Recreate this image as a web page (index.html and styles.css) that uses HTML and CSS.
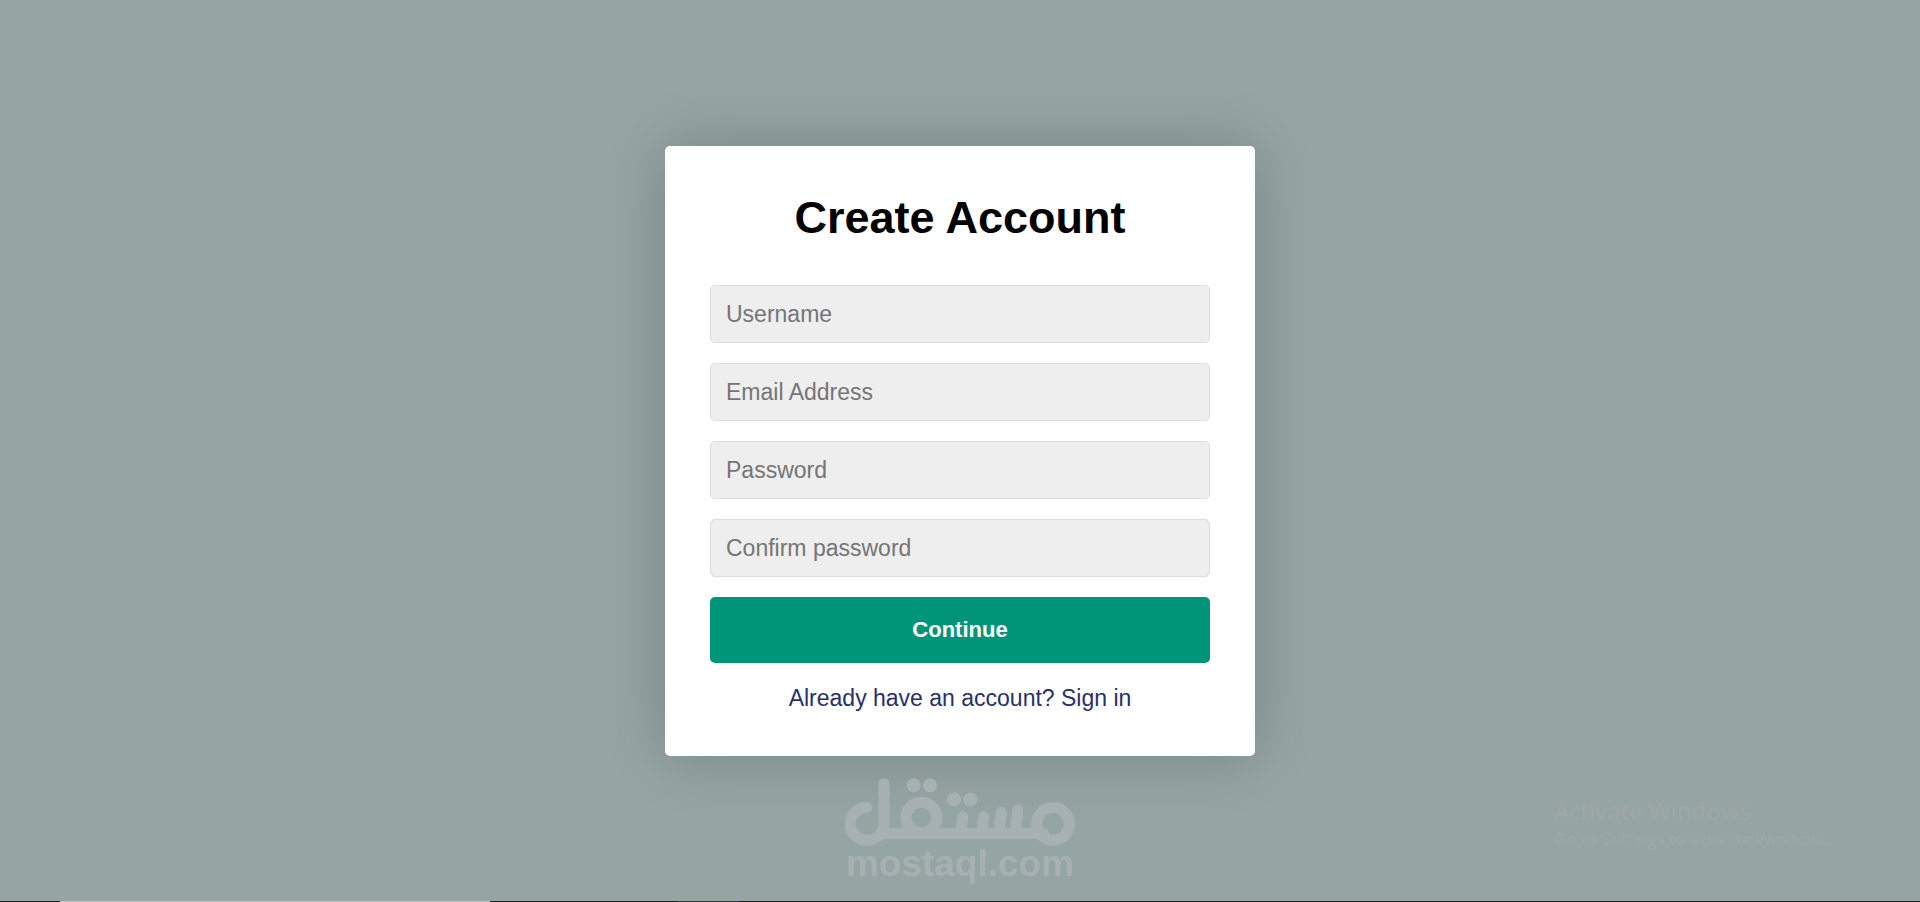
FILE: index.html
```html
<!DOCTYPE html>
<html lang="en">
<head>
    <meta charset="UTF-8">
    <meta name="viewport" content="width=device-width, initial-scale=1.0">
    <title>Create Account</title>
    <link rel="stylesheet" href="styles.css">
</head>
<body>
    <main class="container">
        <form class="form" action="#" method="post">
            <h1 class="form-title">Create Account</h1>
            <input type="text" class="form-input" name="username" placeholder="Username" aria-label="Username">
            <input type="email" class="form-input" name="email" placeholder="Email Address" aria-label="Email Address">
            <input type="password" class="form-input" name="password" placeholder="Password" aria-label="Password">
            <input type="password" class="form-input" name="confirm" placeholder="Confirm password" aria-label="Confirm password">
            <button class="form-button" type="submit">Continue</button>
            <p class="form-text">
                <a class="form-link" href="#">Already have an account? Sign in</a>
            </p>
        </form>
    </main>

    <div class="brand">
        <svg class="brand-logo" viewBox="45 39 690 203" role="img" aria-label="مستقل">
            <g fill="none" stroke="currentColor" stroke-width="33" stroke-linecap="round">
                <path d="M162 55V178A51 49 0 1 1 110 127"/>
                <path d="M150 205H640"/>
                <circle cx="274" cy="157" r="46"/>
                <path d="M398 155L393 200M461 155L457 200M514 142L507 200M563 135L556 200"/>
                <circle cx="669" cy="176" r="49"/>
            </g>
            <g fill="currentColor">
                <circle cx="251" cy="61" r="21"/>
                <circle cx="300" cy="61" r="21"/>
                <circle cx="372" cy="103" r="21"/>
                <circle cx="421" cy="103" r="21"/>
            </g>
        </svg>
        <span class="brand-name">mostaql.com</span>
    </div>

    <div class="activate">
        <p class="activate-title">Activate Windows</p>
        <p class="activate-text">Go to Settings to activate Windows.</p>
    </div>

    <div class="taskbar">
        <span class="taskbar-start"></span>
        <span class="taskbar-search"></span>
        <span class="taskbar-gap"></span>
        <span class="taskbar-app"></span>
    </div>
</body>
</html>
```

FILE: styles.css
```css
:root {
    --primary-color: #009578;
    --background-color: #95a5a4;
    --input-color: #eeeeee;
    --border-color: #dddddd;
    --link-color: #27306b;
}
* {
    box-sizing: border-box;
}
body {
    margin: 0;
    min-height: 100vh;
    display: flex;
    flex-direction: column;
    background: var(--background-color);
    font-family: "Liberation Sans", Arial, sans-serif;
    font-size: 23px;
}
.container {
    flex: 1;
    display: flex;
    align-items: center;
    justify-content: center;
}
.form {
    width: 100%;
    max-width: 590px;
    padding: 45px;
    display: flex;
    flex-direction: column;
    gap: 20px;
    background: #ffffff;
    border-radius: 5px;
    box-shadow: 0 0 60px rgba(0, 0, 0, 0.2);
}
.form-title {
    margin: 0 0 20px;
    font-size: 45px;
    line-height: 54px;
    text-align: center;
    color: #000000;
}
.form-input {
    width: 100%;
    height: 58px;
    padding: 0 15px;
    font-family: inherit;
    font-size: 23px;
    background: var(--input-color);
    border: 1px solid var(--border-color);
    border-radius: 5px;
    outline: none;
}
.form-input::placeholder {
    color: #757575;
}
.form-input:focus {
    border-color: var(--primary-color);
    background: #ffffff;
}
.form-button {
    padding: 20px;
    font-family: inherit;
    font-size: 22px;
    line-height: 26px;
    font-weight: bold;
    color: #ffffff;
    background: var(--primary-color);
    border: none;
    border-radius: 5px;
    cursor: pointer;
}
.form-text {
    margin: 0;
    padding-top: 2px;
    line-height: 26px;
    text-align: center;
}
.form-link {
    color: var(--link-color);
    text-decoration: none;
}
.form-link:hover {
    text-decoration: underline;
}
.brand {
    position: fixed;
    left: 0;
    right: 0;
    bottom: 20px;
    display: flex;
    flex-direction: column;
    align-items: center;
    color: #a7b1b3;
    pointer-events: none;
}
.brand-logo {
    width: 230px;
    height: 68px;
}
.brand-name {
    font-size: 37px;
    line-height: 36px;
    font-weight: bold;
}
.activate {
    position: fixed;
    right: 80px;
    bottom: 51px;
    width: 286px;
    font-family: "Open Sans", "Segoe UI", sans-serif;
    color: #9fa6a6;
    white-space: nowrap;
    pointer-events: none;
}
.activate p {
    margin: 0;
}
.activate-title {
    font-size: 24px;
    line-height: 32px;
}
.activate-text {
    font-size: 17px;
    line-height: 24px;
}
.taskbar {
    position: fixed;
    left: 0;
    right: 0;
    bottom: 0;
    height: 1px;
    display: flex;
    background: #1f2122;
}
.taskbar-start {
    width: 60px;
}
.taskbar-search {
    width: 430px;
    background: #b9c3c2;
}
.taskbar-gap {
    width: 188px;
}
.taskbar-app {
    width: 61px;
    background: #33326b;
}
```
